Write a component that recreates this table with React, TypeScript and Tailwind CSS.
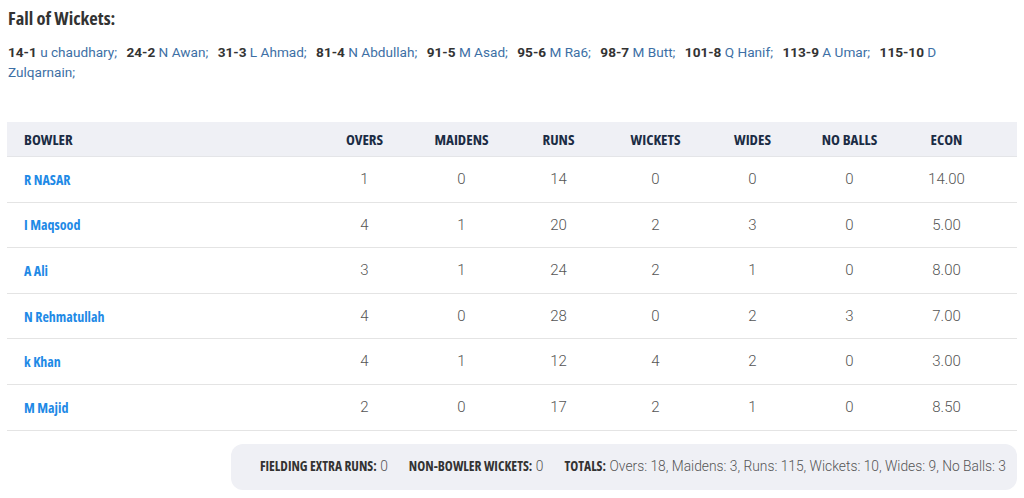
import { Fragment } from 'react';

const wickets = [
  { score: '14-1', name: 'u chaudhary' },
  { score: '24-2', name: 'N Awan' },
  { score: '31-3', name: 'L Ahmad' },
  { score: '81-4', name: 'N Abdullah' },
  { score: '91-5', name: 'M Asad' },
  { score: '95-6', name: 'M Ra6' },
  { score: '98-7', name: 'M Butt' },
  { score: '101-8', name: 'Q Hanif' },
  { score: '113-9', name: 'A Umar' },
  { score: '115-10', name: 'D Zulqarnain' },
];

const bowlers = [
  { name: 'R NASAR', overs: 1, maidens: 0, runs: 14, wickets: 0, wides: 0, noBalls: 0, econ: '14.00' },
  { name: 'I Maqsood', overs: 4, maidens: 1, runs: 20, wickets: 2, wides: 3, noBalls: 0, econ: '5.00' },
  { name: 'A Ali', overs: 3, maidens: 1, runs: 24, wickets: 2, wides: 1, noBalls: 0, econ: '8.00' },
  { name: 'N Rehmatullah', overs: 4, maidens: 0, runs: 28, wickets: 0, wides: 2, noBalls: 3, econ: '7.00' },
  { name: 'k Khan', overs: 4, maidens: 1, runs: 12, wickets: 4, wides: 2, noBalls: 0, econ: '3.00' },
  { name: 'M Majid', overs: 2, maidens: 0, runs: 17, wickets: 2, wides: 1, noBalls: 0, econ: '8.50' },
];

const headers = ['OVERS', 'MAIDENS', 'RUNS', 'WICKETS', 'WIDES', 'NO BALLS', 'ECON'];

const condensed = "font-['Open_Sans',sans-serif] font-stretch-condensed";

export default function App() {
  return (
    <div className="min-h-[498px] bg-white font-['Roboto',sans-serif]">
      <div className="px-[7px] pt-[5px]">
        {/* Fall of wickets */}
        <h3 className={`${condensed} px-[1px] text-[18.5px] leading-[26px] font-bold text-[#333]`}>
          Fall of Wickets:
        </h3>
        <p className="mt-[11px] pl-[1px] pr-[30px] text-[13.6px] leading-[20px] text-[#3d6fa5]">
          {wickets.map((w) => (
            <Fragment key={w.score}>
              <b className="font-bold text-[#333]">{w.score}</b>{' '}
              <span className="mr-[6px]">{w.name};</span>{' '}
            </Fragment>
          ))}
        </p>

        {/* Bowling table */}
        <div className="mt-[40px]">
          <div className="grid h-[35px] grid-cols-[309px_repeat(7,97px)_1fr] items-center border-b border-[#e4e5e8] bg-[#eff0f5]">
            <div className={`${condensed} pl-[17px] text-[15px] font-bold text-[#1b2c44]`}>BOWLER</div>
            {headers.map((h) => (
              <div key={h} className={`${condensed} text-center text-[15px] font-bold text-[#1b2c44]`}>
                {h}
              </div>
            ))}
            <div />
          </div>
          {bowlers.map((b) => (
            <div
              key={b.name}
              className="grid h-[45.6px] grid-cols-[309px_repeat(7,97px)_1fr] items-center border-b border-[#e4e4e4]"
            >
              <div className={`${condensed} pl-[17px] text-[14px] font-bold text-[#1f8ae6]`}>{b.name}</div>
              {[b.overs, b.maidens, b.runs, b.wickets, b.wides, b.noBalls, b.econ].map((v, i) => (
                <div key={i} className="text-center text-[15px] font-light text-[#555]">
                  {v}
                </div>
              ))}
              <div />
            </div>
          ))}
        </div>

        {/* Summary */}
        <div className="mt-[13px] ml-[224px] flex h-[46px] items-center justify-end gap-[21px] rounded-[12px] bg-[#eff0f5] pr-[11px]">
          <div className="text-[13.8px] text-[#555]">
            <span className={`${condensed} text-[13.5px] font-bold text-[#333]`}>FIELDING EXTRA RUNS:</span>{' '}
            <span className="font-light">0</span>
          </div>
          <div className="text-[13.8px] text-[#555]">
            <span className={`${condensed} text-[13.5px] font-bold text-[#333]`}>NON-BOWLER WICKETS:</span>{' '}
            <span className="font-light">0</span>
          </div>
          <div className="text-[13.8px] text-[#555]">
            <span className={`${condensed} text-[13.5px] font-bold text-[#333]`}>TOTALS:</span>{' '}
            <span className="font-light">Overs: 18, Maidens: 3, Runs: 115, Wickets: 10, Wides: 9, No Balls: 3</span>
          </div>
        </div>
      </div>
    </div>
  );
}
